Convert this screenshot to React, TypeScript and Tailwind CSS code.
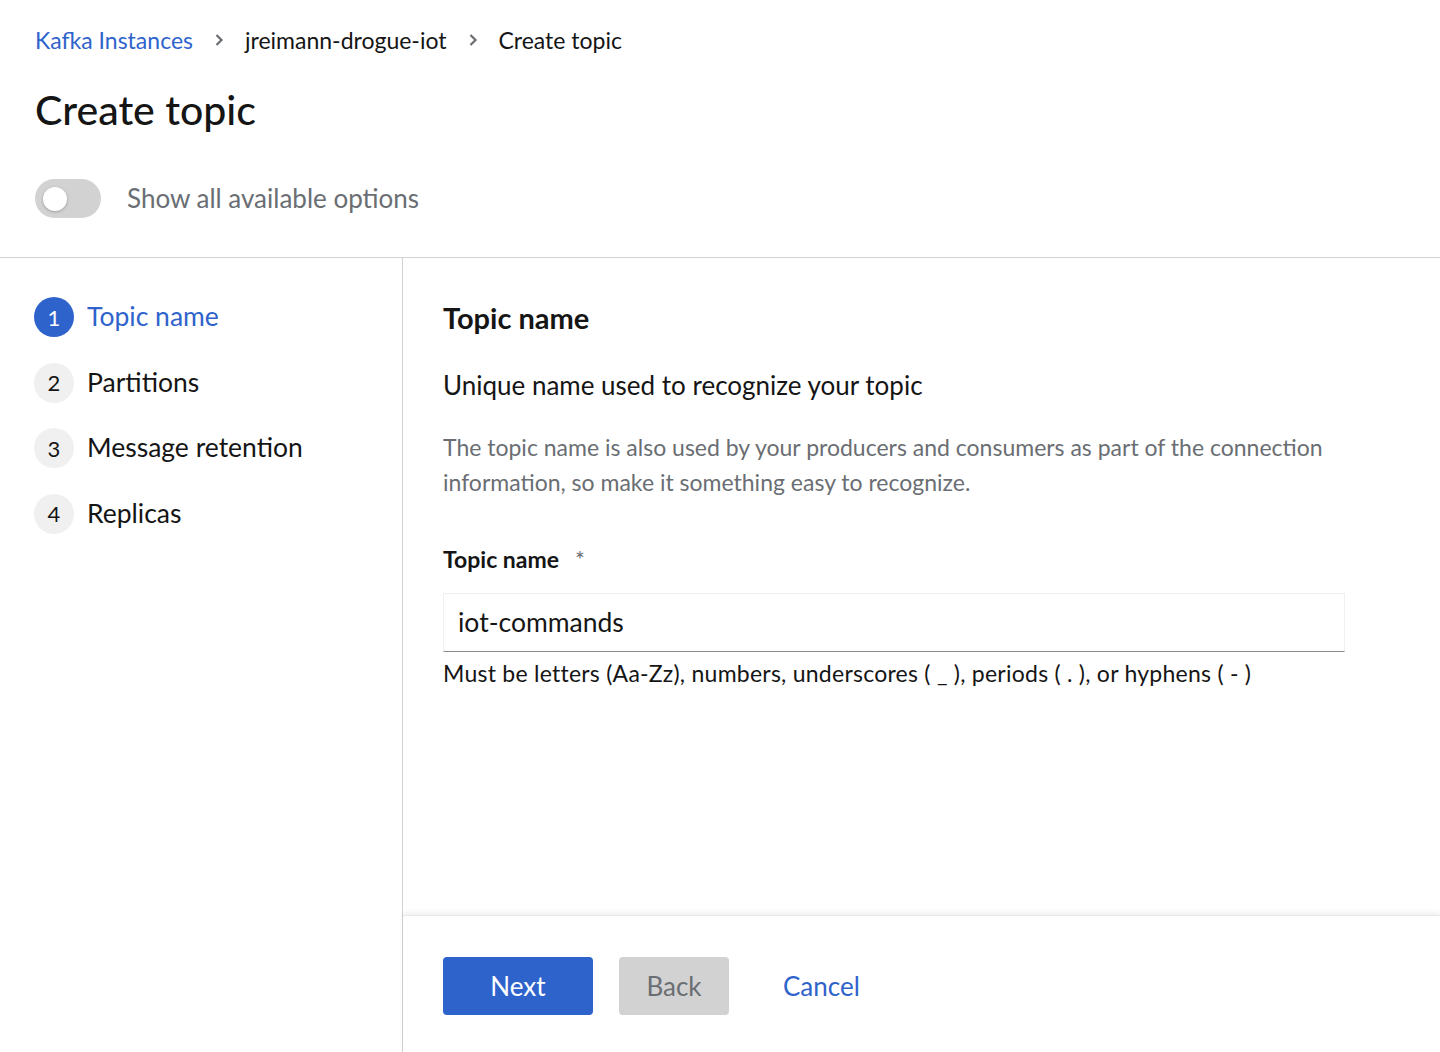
import { useState } from 'react';

const steps = [
  { n: 1, label: 'Topic name' },
  { n: 2, label: 'Partitions' },
  { n: 3, label: 'Message retention' },
  { n: 4, label: 'Replicas' },
];

function Chevron() {
  return (
    <svg width="10" height="14" viewBox="0 0 10 14" className="mx-[21px]">
      <path d="M2.5 2 L7.5 7 L2.5 12" fill="none" stroke="#6a6e73" strokeWidth="2.2" />
    </svg>
  );
}

export default function App() {
  const [name, setName] = useState('iot-commands');
  const active = 1;

  return (
    <div className="flex min-h-[1052px] flex-col bg-white font-['Lato',_sans-serif] text-[#151515]">
      <div className="border-b border-[#d2d2d2] px-[35px] pt-[25px] pb-[39px]">
        <nav className="flex h-[30px] items-center text-[23px]">
          <a href="#" className="text-[#2f63cc]">Kafka Instances</a>
          <Chevron />
          <span>jreimann-drogue-iot</span>
          <Chevron />
          <span>Create topic</span>
        </nav>
        <h1 className="mt-[27px] text-[41px] leading-[56px] font-medium">Create topic</h1>
        <div className="mt-[41px] flex items-center gap-[26px]">
          <div className="flex h-[39px] w-[66px] items-center rounded-full bg-[#d2d2d2] pl-[8px]">
            <span className="h-[24px] w-[24px] rounded-full bg-white shadow-[0_1px_3px_rgba(0,0,0,0.25)]" />
          </div>
          <span className="text-[26px] text-[#6a6e73]">Show all available options</span>
        </div>
      </div>

      <div className="flex flex-1">
        <aside className="w-[403px] shrink-0 border-r border-[#d2d2d2] px-[34px] pt-[39px]">
          <ul className="flex flex-col gap-[25.5px]">
            {steps.map((s) => (
              <li key={s.n} className="flex items-center gap-[13px]">
                <span
                  className={
                    s.n === active
                      ? 'grid h-[40px] w-[40px] place-items-center rounded-full bg-[#2f63cc] text-[22px] text-white'
                      : 'grid h-[40px] w-[40px] place-items-center rounded-full bg-[#f0f0f0] text-[22px] text-[#151515]'
                  }
                >
                  {s.n}
                </span>
                <span className={s.n === active ? 'text-[26.5px] text-[#2f63cc]' : 'text-[26.5px] text-[#151515]'}>
                  {s.label}
                </span>
              </li>
            ))}
          </ul>
        </aside>

        <main className="flex flex-1 flex-col">
          <div className="flex-1 px-[40px] pt-[40px]">
            <h2 className="text-[29px] leading-[40px] font-bold">Topic name</h2>
            <p className="mt-[27px] text-[26px] leading-[40px]">Unique name used to recognize your topic</p>
            <p className="mt-[25px] max-w-[900px] text-[23px] leading-[35px] text-[#6a6e73]">
              The topic name is also used by your producers and consumers as part of the connection information, so
              make it something easy to recognize.
            </p>
            <label className="mt-[42px] flex items-center text-[23px] font-bold">
              Topic name
              <span className="ml-[16px] font-normal text-[#6a6e73]">*</span>
            </label>
            <input
              value={name}
              onChange={(e) => setName(e.target.value)}
              className="mt-[16px] h-[59px] w-[902px] border border-[#f0f0f0] border-b-[#8a8d90] px-[14px] text-[26.5px] text-[#151515] outline-none"
            />
            <p className="mt-[4px] text-[23px] leading-[35px] tracking-[0.25px]">
              Must be letters (Aa-Zz), numbers, underscores ( _ ), periods ( . ), or hyphens ( - )
            </p>
          </div>
          <footer className="flex h-[137px] items-start gap-[26px] border-t border-[#e8e8e8] px-[40px] pt-[41px] shadow-[0_-3px_5px_rgba(0,0,0,0.06)]">
            <button className="h-[58px] w-[150px] rounded-[4px] bg-[#2f63cc] text-[26px] text-white">Next</button>
            <button className="h-[58px] w-[110px] rounded-[4px] bg-[#d2d2d2] text-[26px] text-[#6a6e73]">Back</button>
            <button className="ml-[14px] h-[58px] px-[14px] text-[26px] text-[#2f63cc]">Cancel</button>
          </footer>
        </main>
      </div>
    </div>
  );
}
